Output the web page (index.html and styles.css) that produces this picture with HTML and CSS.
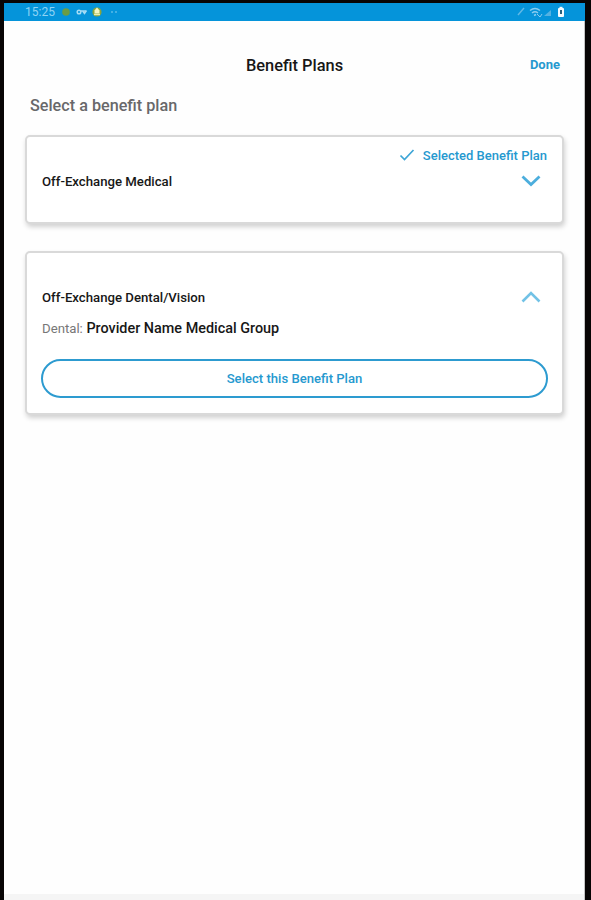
FILE: index.html
```html
<!DOCTYPE html>
<html lang="en">

<head>
  <meta charset="UTF-8" />
  <meta name="viewport" content="width=device-width, initial-scale=1.0" />
  <title>Benefit Plans</title>
  <link rel="stylesheet" href="styles.css">
</head>

<body>
  <div class="screen">
    <!-- Status bar -->
    <div class="status-bar">
      <span class="time">15:25</span>
      <svg class="status-left" width="60" height="14" viewBox="0 0 60 14">
        <circle cx="6" cy="7" r="3.8" fill="#6b9c45" />
        <g fill="none" stroke="#a5dcf5" stroke-width="1.5">
          <circle cx="19" cy="7" r="1.8" />
          <path d="M21 6h5M23 6.5l1.5 2 2-3" />
        </g>
        <circle cx="37" cy="7" r="4.6" fill="#8ba43c" />
        <path d="M37 2.5l2.5 3v3h-5v-3z" fill="#f4f6c4" />
        <path d="M34 9.5h6" stroke="#e8efb4" stroke-width="1.5" />
        <path d="M52 6v2M56 6v2" stroke="#6fc3ec" stroke-width="1.2" />
      </svg>
      <svg class="status-right" width="52" height="14" viewBox="0 0 52 14">
        <path d="M3 10l6-7" stroke="#62b9e6" stroke-width="1.4" />
        <g fill="none" stroke="#8accef" stroke-width="1.5">
          <path d="M15 5.5q5-4 10 0M17 8q3-2.5 6 0M19 10.5l2-1" />
          <path d="M22 9l3 3 2-3" stroke-width="1" />
        </g>
        <path d="M29 11l7-6v6z" fill="#55b2e2" />
        <rect x="43" y="3" width="6" height="9" rx="1" fill="#f4fbff" />
        <rect x="44.5" y="1.8" width="3" height="2" fill="#f4fbff" />
        <path d="M46 5v4" stroke="#14506f" stroke-width="1.8" />
      </svg>
    </div>

    <!-- Header -->
    <header class="header">
      <h1>Benefit Plans</h1>
      <button type="button" class="done">Done</button>
    </header>

    <main class="content">
      <h2>Select a benefit plan</h2>

      <!-- Selected plan -->
      <section class="card card-selected">
        <div class="selected-label">
          <svg width="16" height="12" viewBox="0 0 16 12">
            <path d="M1.5 6.5l4 4 9-9.5" fill="none" stroke="#3da5d6" stroke-width="1.7" />
          </svg>
          <span>Selected Benefit Plan</span>
        </div>
        <div class="plan-row">
          <h3>Off-Exchange Medical</h3>
          <svg class="chevron" width="20" height="12" viewBox="0 0 20 12">
            <path d="M1.5 1.5l8.5 8 8.5-8" fill="none" stroke="#4caedd" stroke-width="2.8" />
          </svg>
        </div>
      </section>

      <!-- Expanded plan -->
      <section class="card card-open">
        <div class="plan-row">
          <h3>Off-Exchange Dental/Vision</h3>
          <svg class="chevron" width="20" height="12" viewBox="0 0 20 12">
            <path d="M1.5 10.5l8.5-8.5 8.5 8.5" fill="none" stroke="#72c2e6" stroke-width="2.6" />
          </svg>
        </div>
        <p class="provider"><span>Dental:</span> <strong>Provider Name Medical Group</strong></p>
        <button type="button" class="select-button">Select this Benefit Plan</button>
      </section>
    </main>
    <div class="bottom-bar"></div>
  </div>
</body>

</html>
```
FILE: styles.css
```css
* {
  margin: 0;
  padding: 0;
  box-sizing: border-box;
}

body {
  height: 900px;
  padding: 3px 6px 0 4px;
  background: #080505;
  font-family: Roboto, sans-serif;
  color: #171717;
  overflow: hidden;
}

button {
  border: none;
  background: none;
  font-family: inherit;
  cursor: pointer;
}

svg {
  display: block;
  flex-shrink: 0;
}

.screen {
  display: flex;
  flex-direction: column;
  height: 897px;
  background: #fefefe;
  border-right: 1px solid #c4c4c4;
}

/* Status bar */
.status-bar {
  display: flex;
  align-items: center;
  height: 18px;
  margin-right: -1px;
  padding: 0 18px 0 21px;
  background: #0594da;
}

.time {
  width: 31px;
  font-size: 12px;
  line-height: 18px;
  color: #8ed3f4;
}

.status-left {
  margin-left: 4px;
}

.status-right {
  margin-left: auto;
}

/* Header */
.header {
  display: grid;
  grid-template-columns: 1fr auto 1fr;
  align-items: center;
  height: 44px;
  margin-top: 22px;
  padding: 0 24px 0 25px;
}

.header h1 {
  grid-column: 2;
  padding-top: 2px;
  font-size: 16.4px;
  font-weight: 500;
  line-height: 20px;
}

.done {
  justify-self: end;
  padding-bottom: 2px;
  font-size: 13px;
  font-weight: 700;
  color: #2699cf;
}

.content {
  flex: 1;
  padding: 9px 20px 0 21px;
}

.content h2 {
  height: 39px;
  padding-left: 5px;
  font-size: 16.2px;
  font-weight: 500;
  line-height: 20px;
  color: #68686a;
}

/* Plan cards */
.card {
  border: 2px solid #d9d9d9;
  border-radius: 5px;
  background: #fff;
  box-shadow: 1px 3px 5px rgba(0, 0, 0, 0.18);
}

.card-selected {
  height: 89px;
  padding: 10px 15px 0;
}

.card-open {
  height: 164px;
  margin-top: 27px;
  padding: 34px 14px 0;
}

.selected-label {
  display: flex;
  justify-content: flex-end;
  align-items: center;
  gap: 8px;
  height: 16px;
  font-size: 13px;
  font-weight: 500;
  color: #2699cf;
}

.plan-row {
  display: flex;
  justify-content: space-between;
  align-items: center;
  height: 20px;
  padding-right: 6px;
}

.card-selected .plan-row {
  margin-top: 8px;
}

.card-open .plan-row {
  padding-right: 7px;
}

.plan-row h3 {
  font-size: 13.2px;
  font-weight: 500;
}

.card-open h3,
.provider {
  padding-left: 1px;
}

.provider {
  margin-top: 12px;
  font-size: 14.4px;
  line-height: 20px;
}

.provider span {
  font-size: 13.2px;
  color: #777;
}

.provider strong {
  font-weight: 500;
}

.select-button {
  display: block;
  width: 100%;
  height: 39px;
  margin-top: 20px;
  border: 2px solid #2d9bd0;
  border-radius: 20px;
  font-size: 13.1px;
  font-weight: 500;
  color: #2699cf;
}

.bottom-bar {
  height: 6px;
  background: #f5f5f5;
}
```
